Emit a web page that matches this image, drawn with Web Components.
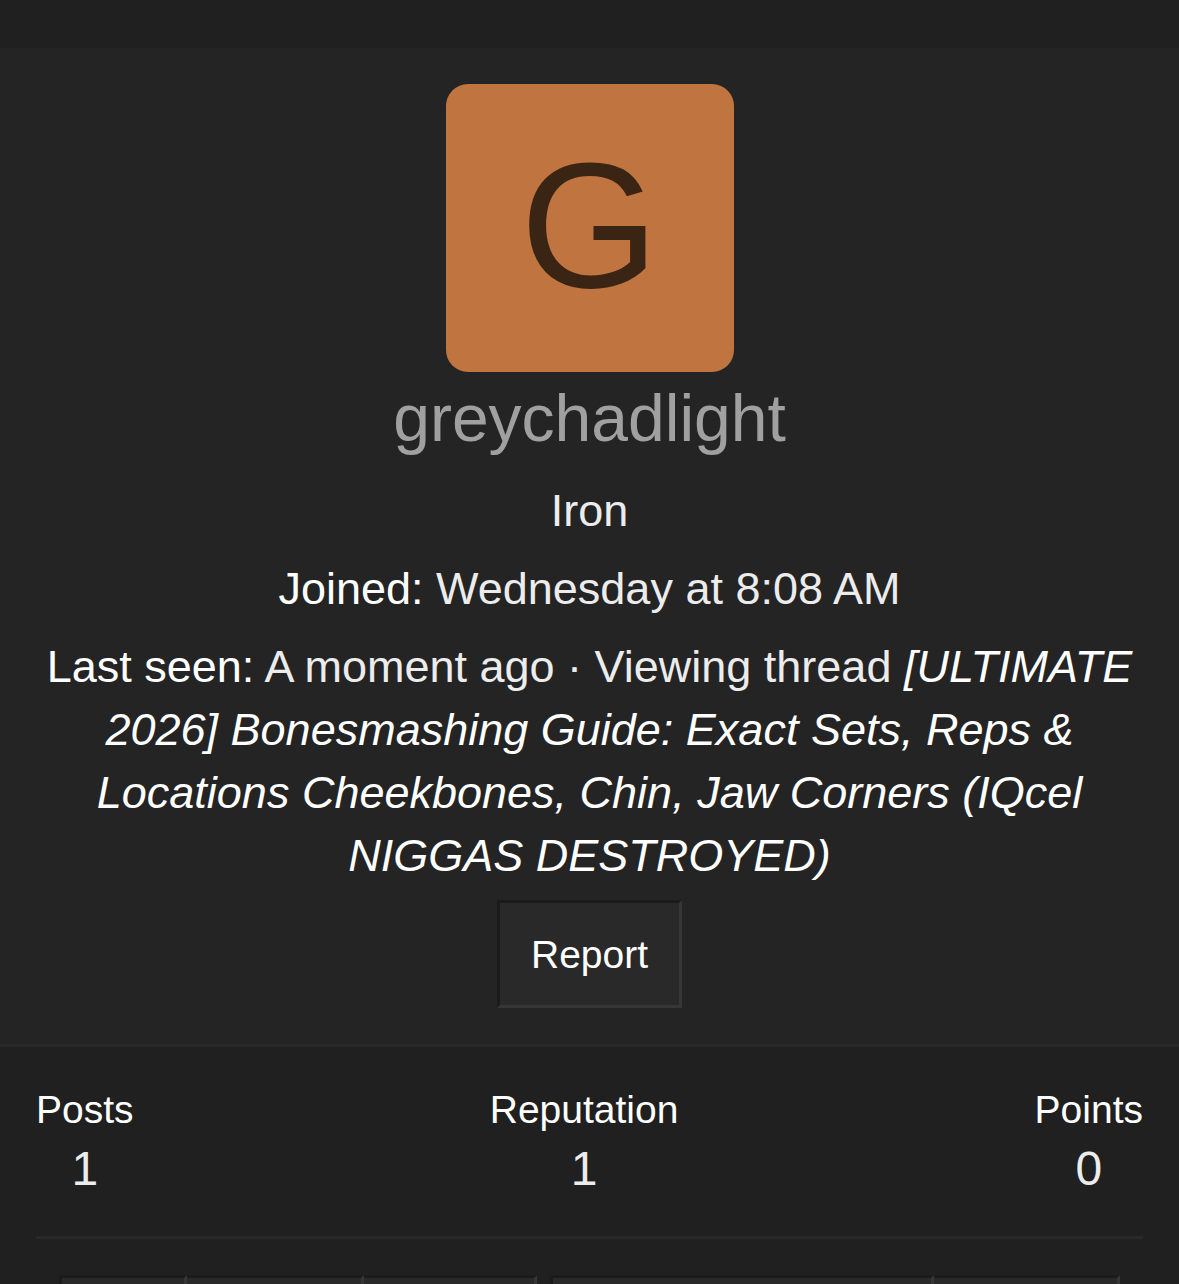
<!DOCTYPE html>
<html lang="en">
<head>
<meta charset="utf-8">
<meta name="viewport" content="width=device-width, initial-scale=1">
<title>greychadlight</title>
<style>
body {
    margin: 0;
    background: #202020;
    font-family: "Liberation Sans", Arial, sans-serif;
}
</style>
</head>
<body>

<member-card>
    <member-header>
        <member-avatar slot="avatar" letter="G"></member-avatar>
        <span slot="name">greychadlight</span>
        <span slot="title">Iron</span>
        <member-blurb label="Joined:">Wednesday at 8:08 AM</member-blurb>
        <member-blurb label="Last seen:">A moment ago · Viewing thread <a href="#thread">[ULTIMATE 2026] Bonesmashing Guide: Exact Sets, Reps &amp; Locations Cheekbones, Chin, Jaw Corners (IQcel NIGGAS DESTROYED)</a></member-blurb>
        <bevel-button slot="action">Report</bevel-button>
    </member-header>
    <stat-row slot="details">
        <stat-item label="Posts">1</stat-item>
        <stat-item label="Reputation">1</stat-item>
        <stat-item label="Points">0</stat-item>
    </stat-row>
    <button-group slot="buttons" style="flex: 478">
        <bevel-button style="flex: 128"></bevel-button>
        <bevel-button style="flex: 177"></bevel-button>
        <bevel-button style="flex: 173"></bevel-button>
    </button-group>
    <button-group slot="buttons" style="flex: 570">
        <bevel-button style="flex: 384"></bevel-button>
        <bevel-button style="flex: 186"></bevel-button>
    </button-group>
</member-card>

<script>
/**
 * Attach an open shadow root with the given styling and markup
 *
 * @param {HTMLElement} host
 * @param {string} css
 * @param {string} html
 */
function attach(host, css, html) {
    host.attachShadow({ mode: 'open' });
    host.shadowRoot.innerHTML = `<style>* { box-sizing: border-box; }${css}</style>${html}`;
}

/** Custom element `<member-card>`, the whole scrollable card */
class MemberCard extends HTMLElement {
    constructor() {
        super();
        attach(this, `
            :host {
                display: block;
                height: 100vh;
                padding-top: 48px;
                overflow-y: auto;
                scrollbar-width: none;
                box-sizing: border-box;
                color: #ececec;
            }
            .details {
                margin: 0 36px;
                padding: 36px 0;
                border-bottom: 3px solid #292929;
            }
            .buttons {
                display: flex;
                gap: 13px;
                padding: 36px 59px;
            }
        `, `
            <slot></slot>
            <div class="details"><slot name="details"></slot></div>
            <div class="buttons"><slot name="buttons"></slot></div>
        `);
    }
}

/** Custom element `<member-header>`, avatar, name and blurbs */
class MemberHeader extends HTMLElement {
    constructor() {
        super();
        attach(this, `
            :host {
                display: flex;
                flex-direction: column;
                align-items: center;
                padding: 36px;
                background: #242424;
                border-bottom: 3px solid #292929;
                text-align: center;
                font-size: 45px;
                line-height: 63px;
            }
            h1 {
                margin: 0;
                color: #a0a0a0;
                font-size: 66px;
                font-weight: 400;
                line-height: 92px;
            }
            .blurbs {
                display: flex;
                flex-direction: column;
                gap: 15px;
                margin: 15px 0 13px;
            }
        `, `
            <slot name="avatar"></slot>
            <h1><slot name="name"></slot></h1>
            <div class="blurbs">
                <slot name="title"></slot>
                <slot></slot>
            </div>
            <slot name="action"></slot>
        `);
    }
}

/** Custom element `<member-avatar>`, a coloured tile with one letter */
class MemberAvatar extends HTMLElement {
    constructor() {
        super();
        attach(this, `
            :host {
                display: flex;
                align-items: center;
                justify-content: center;
                width: 288px;
                height: 288px;
                border-radius: 22px;
                background: #c07540;
                color: #3a2413;
                font-size: 178px;
                line-height: 284px;
            }
            span { height: 288px; }
        `, `<span></span>`);
        this.shadowRoot.querySelector('span').textContent = this.getAttribute('letter');
    }
}

/** Custom element `<member-blurb>`, a label followed by its value */
class MemberBlurb extends HTMLElement {
    constructor() {
        super();
        attach(this, `
            :host { display: block; }
            .label { color: #fff; }
            ::slotted(a) {
                color: #fff;
                font-style: italic;
                text-decoration: none;
            }
        `, `<span class="label"></span> <slot></slot>`);
        this.shadowRoot.querySelector('.label').textContent = this.getAttribute('label');
    }
}

/** Custom element `<bevel-button>` */
class BevelButton extends HTMLElement {
    constructor() {
        super();
        attach(this, `
            :host { display: block; }
            button {
                width: 100%;
                height: 108px;
                padding: 0 31px;
                border: 3px solid;
                border-color: #1b1b1b #363636 #363636 #1b1b1b;
                border-left-width: var(--bevel-left, 3px);
                background: #292929;
                color: #fff;
                font: inherit;
                font-size: 39px;
                cursor: pointer;
            }
        `, `<button type="button"><slot></slot></button>`);
    }
}

/** Custom element `<button-group>`, buttons joined edge to edge */
class ButtonGroup extends HTMLElement {
    constructor() {
        super();
        attach(this, `
            :host { display: flex; }
            ::slotted(:not(:first-child)) { --bevel-left: 0; }
        `, `<slot></slot>`);
    }
}

/** Custom element `<stat-row>` */
class StatRow extends HTMLElement {
    constructor() {
        super();
        attach(this, `
            :host {
                display: flex;
                justify-content: space-between;
            }
        `, `<slot></slot>`);
    }
}

/** Custom element `<stat-item>`, a count under its label */
class StatItem extends HTMLElement {
    constructor() {
        super();
        attach(this, `
            dl, dd { margin: 0; }
            :host { text-align: center; }
            dt {
                color: #fff;
                font-size: 39px;
                line-height: 54px;
            }
            dd {
                font-size: 48px;
                line-height: 63px;
            }
        `, `<dl><dt></dt><dd><slot></slot></dd></dl>`);
        this.shadowRoot.querySelector('dt').textContent = this.getAttribute('label');
    }
}

customElements.define('member-card', MemberCard);
customElements.define('member-header', MemberHeader);
customElements.define('member-avatar', MemberAvatar);
customElements.define('member-blurb', MemberBlurb);
customElements.define('bevel-button', BevelButton);
customElements.define('button-group', ButtonGroup);
customElements.define('stat-row', StatRow);
customElements.define('stat-item', StatItem);
</script>
</body>
</html>
